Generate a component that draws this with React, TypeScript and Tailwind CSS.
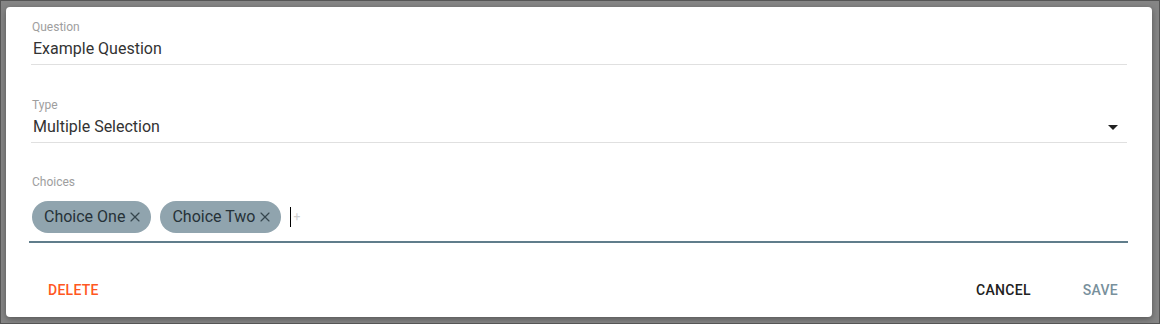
import { X } from 'lucide-react';

const font = { fontFamily: 'Roboto, "Noto Sans", Arial, sans-serif' };

function Chip({ label }: { label: string }) {
  return (
    <div className="flex h-8 items-center rounded-full bg-[#90a4ae] pl-[12px] pr-[8px] text-[16px] text-[#263238]">
      <span>{label}</span>
      <X className="ml-[2px] h-[16px] w-[16px] text-[#37474f]" strokeWidth={1.75} />
    </div>
  );
}

export default function App() {
  return (
    <div
      className="h-[324px] w-[1160px] overflow-hidden border border-[#555555] bg-[#858585] pl-[5px] pt-[6px]"
      style={font}
    >
      <div className="flex h-[310px] w-[1146px] flex-col rounded-[4px] bg-white px-[25px] pt-[13px] shadow-[0_2px_6px_rgba(0,0,0,0.35)]">
        {/* Question */}
        <div className="flex flex-col">
          <div className="h-[14px] pl-[1px] text-[12px] leading-[14px] text-[#9e9e9e]">Question</div>
          <div className="flex h-[31px] items-center border-b border-[#e0e0e0] pl-[2px] text-[16px] text-[#333333]">
            Example Question
          </div>
        </div>

        {/* Type */}
        <div className="mt-[33px] flex flex-col">
          <div className="h-[14px] pl-[1px] text-[12px] leading-[14px] text-[#9e9e9e]">Type</div>
          <div className="flex h-[31px] items-center justify-between border-b border-[#e0e0e0] pl-[2px] text-[16px] text-[#333333]">
            <span>Multiple Selection</span>
            <svg viewBox="0 0 24 24" className="mr-[2px] h-6 w-6 fill-[#212121]">
              <path d="M7 10l5 5 5-5z" />
            </svg>
          </div>
        </div>

        {/* Choices */}
        <div className="mt-[32px] flex flex-col">
          <div className="h-[14px] pl-[1px] text-[12px] leading-[14px] text-[#9e9e9e]">Choices</div>
          <div className="-ml-[2px] -mr-[1px] flex items-center gap-[9px] border-b-2 border-[#607d8b] pb-[8px] pl-[3px] pt-[12px]">
            <Chip label="Choice One" />
            <Chip label="Choice Two" />
            <div className="flex items-center">
              <div className="h-[20px] w-[1px] bg-black" />
              <span className="ml-[2px] text-[12px] leading-none text-[#cfcfcf]">+</span>
            </div>
          </div>
        </div>

        {/* Actions */}
        <div className="mt-[29px] flex h-9 items-center justify-between">
          <button className="ml-[1px] h-9 px-4 text-[14px] font-medium tracking-[0.02em] text-[#ff5722]">
            DELETE
          </button>
          <div className="mr-[-7px] flex items-center gap-5">
            <button className="h-9 px-4 text-[14px] font-medium tracking-[0.02em] text-[#212121]">CANCEL</button>
            <button className="h-9 px-4 text-[14px] font-medium tracking-[0.02em] text-[#78909c]">SAVE</button>
          </div>
        </div>
      </div>
    </div>
  );
}
